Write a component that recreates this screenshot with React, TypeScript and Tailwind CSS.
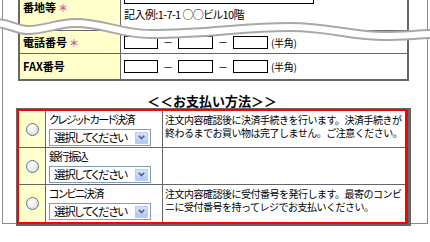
import React from 'react';

const font = "font-['Noto_Sans_CJK_JP','Liberation_Sans',sans-serif]";

const Req = () => <span className="ml-[2px] text-[10px] text-[#d0609a]">＊</span>;

const Box = ({ w }: { w: string }) => <span className={`inline-block h-[13px] ${w} border border-black bg-white`} />;

const Dash = () => <span className="mx-[5px] text-[10px] leading-none">－</span>;

const PhoneInputs = () => (
  <div className="flex items-center pl-[3px]">
    <Box w="w-[34px]" />
    <Dash />
    <Box w="w-[35px]" />
    <Dash />
    <Box w="w-[35px]" />
    <span className="ml-[3px] text-[10px] tracking-[-0.3px]">(半角)</span>
  </div>
);

const Radio = () => (
  <span className="block h-[13px] w-[13px] rounded-full border border-[#5a7590] bg-[radial-gradient(circle_at_35%_30%,#ffffff_0%,#f2f2f2_40%,#c9ced6_100%)]" />
);

const Select = () => (
  <div className="mt-[3px] flex h-[17px] w-[102px] items-center justify-between overflow-hidden border border-[#7f9db9] bg-white pl-[4px] pr-[2px]">
    <span className="whitespace-nowrap text-[11.5px] leading-none tracking-[-1.3px] [font-feature-settings:'palt']">選択してください</span>
    <span className="flex h-[12px] w-[13px] shrink-0 items-center justify-center border border-[#b8ccf7] bg-gradient-to-b from-[#d6e2fd] to-[#b3c8f8]">
      <svg width="7" height="5" viewBox="0 0 7 5">
        <path d="M0.8 0.8 L3.5 3.6 L6.2 0.8" fill="none" stroke="#4d6185" strokeWidth="1.6" />
      </svg>
    </span>
  </div>
);

type Pay = { label: string; desc?: string[] };

const methods: Pay[] = [
  { label: 'クレジットカード決済', desc: ['注文内容確認後に決済手続きを行います。決済手続きが', '終わるまでお買い物は完了しません。ご注意ください。'] },
  { label: '銀行振込' },
  { label: 'コンビニ決済', desc: ['注文内容確認後に受付番号を発行します。最寄のコンビ', 'ニに受付番号を持ってレジでお支払いください。'] },
];

export default function App() {
  return (
    <div className={`relative h-[242px] w-[430px] overflow-hidden bg-white text-black ${font}`}>
      <div className="ml-[2px] h-[240px] w-[426px] border-x border-b border-[#8a8a8a]">
        {/* address table, top rows scrolled off */}
        <div className="ml-[15px] mt-[-16px] w-[391px] border-x-2 border-b-2 border-[#666]">
          <div className="grid h-[47px] grid-cols-[101px_1fr] border-b border-[#666]">
            <div className="flex items-center border-r border-[#666] bg-[#ffffcc] pl-[3px] text-[11px] font-bold">
              番地等<Req />
            </div>
            <div className="pl-[3px] pt-[2px]">
              <div className="h-[18px] w-[190px] border border-black" />
              <div className="mt-[4px] whitespace-nowrap text-[11px] leading-[13px] tracking-[-0.6px] [font-feature-settings:'palt']">記入例:1-7-1 ○○ビル10階</div>
            </div>
          </div>
          <div className="grid h-[23px] grid-cols-[101px_1fr] border-b border-[#666]">
            <div className="flex items-center border-r border-[#666] bg-[#ffffcc] pl-[3px] text-[11px] font-bold">
              電話番号<Req />
            </div>
            <PhoneInputs />
          </div>
          <div className="grid h-[25px] grid-cols-[101px_1fr]">
            <div className="flex items-center border-r border-[#666] bg-[#ffffcc] pl-[3px] text-[11px] font-bold">FAX番号</div>
            <PhoneInputs />
          </div>
        </div>

        <div className="mt-[12px] pr-[6px] text-center text-[13px] font-bold leading-[15px]">＜＜お支払い方法＞＞</div>

        <div className="ml-[13px] w-[395px] border-b-2 border-l border-r-[3px] border-t border-[#666]">
          <div className="border-2 border-r-[3px] border-[#ff0000]">
            {methods.map((m, i) => (
              <div key={m.label} className={`grid h-[37px] grid-cols-[27px_117px_1fr] ${i < methods.length - 1 ? 'border-b border-[#666]' : ''}`}>
                <div className="flex items-center justify-center border-r border-[#666] bg-[#ffffcc]">
                  <Radio />
                </div>
                <div className="border-r border-[#666] pl-[3px] pt-[2px]">
                  <div className="whitespace-nowrap text-[11px] leading-[13px] tracking-[-1.4px] [font-feature-settings:'palt']">{m.label}</div>
                  <Select />
                </div>
                <div className="whitespace-nowrap pl-[2px] pt-[2px] text-[10px] leading-[13px] tracking-[-0.5px]">
                  {m.desc?.map((l) => <div key={l}>{l}</div>)}
                </div>
              </div>
            ))}
          </div>
        </div>
      </div>

      {/* torn-page break marker */}
      <svg className="absolute left-0 top-0" width="430" height="45" viewBox="0 0 430 45">
        <path d="M-5 23 C10 23 15 30 28 30 C45 30 58 23 75 23 C105 23 120 34 150 34 C210 34 240 27 290 27 C330 27 350 36 385 36 C405 36 420 34 435 34" fill="none" stroke="#a8a8a8" strokeWidth="10" />
        <path d="M-5 23 C10 23 15 30 28 30 C45 30 58 23 75 23 C105 23 120 34 150 34 C210 34 240 27 290 27 C330 27 350 36 385 36 C405 36 420 34 435 34" fill="none" stroke="#ffffff" strokeWidth="6" />
      </svg>
    </div>
  );
}
